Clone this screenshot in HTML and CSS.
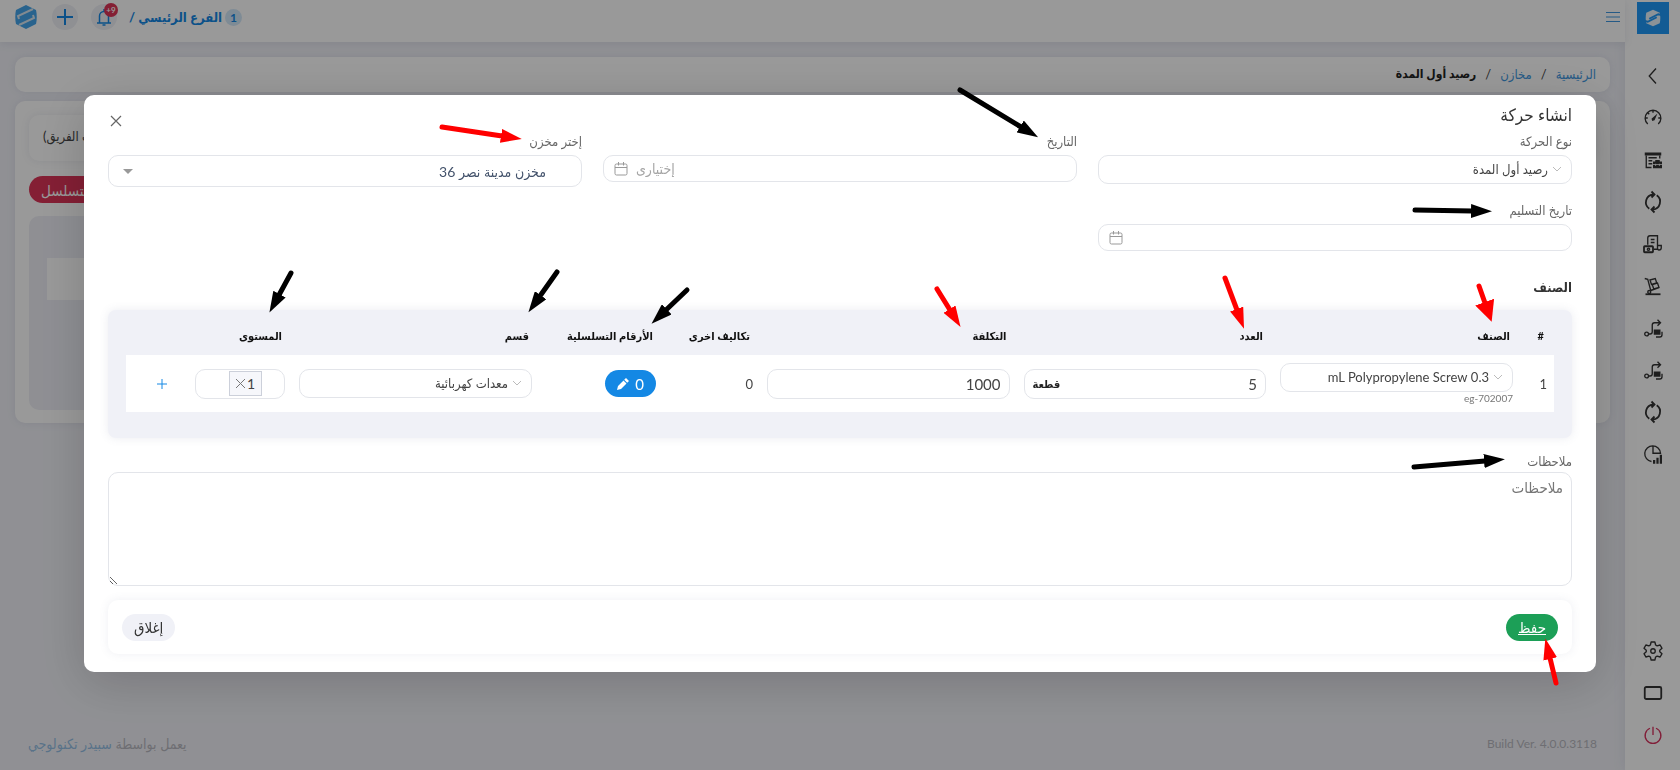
FILE: index.html
```html
<!DOCTYPE html>
<html lang="ar" dir="rtl">

<head>
    <meta charset="UTF-8">
    <meta name="viewport" content="width=device-width, initial-scale=1.0">
    <title>رصيد أول المدة</title>
    <link rel="stylesheet" href="styles.css">
</head>

<body>

    <div class="layout">

        <!-- Sidebar -->
        <aside class="sidebar">
            <a href="#" class="sidebar-logo" aria-label="الرئيسية">
                <svg width="18" height="18" viewBox="0 0 24 24"><path d="M12 1l9 4c1 4 1 10 0 14l-9 4-9-4C2 15 2 9 3 5z" fill="#e8f3fc"/><path d="M23 8l-4-1-12 6M1 16l4 1 12-6" fill="none" stroke="#1f98f7" stroke-width="2.500"/></svg>
            </a>
            <nav class="sidebar-nav">
                <a href="#" aria-label="رجوع"><svg viewBox="0 0 24 24"><path d="M16 2L7 12l9 10"/></svg></a>
                <a href="#" aria-label="لوحة التحكم"><svg viewBox="0 0 24 24"><path d="M5 20a10.500 10.500 0 1 1 14 0M12 2v3M2 12h3M19 12h3M5 5l2 2"/><path class="solid" d="M18 6l-4 9-3 1-1-3z"/></svg></a>
                <a href="#" aria-label="مخازن"><svg viewBox="0 0 24 24"><path class="solid" d="M1 2h22v4H1zM13 14h2v-2h6v2h3v9H12v-9z"/><path d="M3 6v16h7M21 6v4M6 9h11M6 13h5M6 17h5"/><path class="knock" d="M12 18h12M15.500 17v3M20.500 17v3"/></svg></a>
                <a href="#" aria-label="تحديث"><svg viewBox="0 0 24 24"><path class="thick" d="M7 21A10.500 10.500 0 0 1 12 2M17 3a10.500 10.500 0 0 1-5 19M10-2l4 4-4 4M14 18l-4 4 4 4"/></svg></a>
                <a href="#" aria-label="فواتير"><svg viewBox="0 0 24 24"><path d="M5 13V4c0-2 1-3 3-3h10v18h-5M18 14h5v3c0 2-1 3-3 3s-2-1-2-3M9 6h5M9 10h5"/><rect x="0" y="15" width="12" height="8" rx="1" class="thick"/><circle cx="6" cy="19" r="1.500"/></svg></a>
                <a href="#" aria-label="نقل"><svg viewBox="0 0 24 24"><path d="M1 2l4 1 4 15M9 18l11-4M8 4l7-2 2 6-7 2zM11 10l7-2 2 6-7 2z"/><circle cx="7" cy="20" r="2"/><path class="thick" d="M2 23h20"/></svg></a>
                <a href="#" aria-label="تحويل"><svg viewBox="0 0 24 24"><circle cx="3.500" cy="20" r="2.500"/><path d="M6 20h2c2 0 3-1 3-3V8c0-2 1-3 3-3h8M18 1l4 4-4 4M24 17v4c0 2-1 3-3 3h-5"/><path class="solid" d="M13 14h9v7h-9z"/></svg></a>
                <a href="#" aria-label="تحويل"><svg viewBox="0 0 24 24"><circle cx="3.500" cy="20" r="2.500"/><path d="M6 20h2c2 0 3-1 3-3V8c0-2 1-3 3-3h8M18 1l4 4-4 4M24 17v4c0 2-1 3-3 3h-5"/><path class="solid" d="M13 14h9v7h-9z"/></svg></a>
                <a href="#" aria-label="تحديث"><svg viewBox="0 0 24 24"><path class="thick" d="M7 21A10.500 10.500 0 0 1 12 2M17 3a10.500 10.500 0 0 1-5 19M10-2l4 4-4 4M14 18l-4 4 4 4"/></svg></a>
                <a href="#" aria-label="تقارير"><svg viewBox="0 0 24 24"><path d="M10 22A10.500 10.500 0 1 1 22 11H12V1"/><path class="solid" d="M12 20h3v5h-3zM16.500 17h3v8h-3zM21 13h3v12h-3z"/></svg></a>
            </nav>
            <nav class="sidebar-nav sidebar-bottom">
                <a href="#" aria-label="الإعدادات"><svg viewBox="0 0 24 24"><path stroke-linejoin="round" d="M9.500 0h5l1 4 2 1.200 4-1.200 2.500 4.400-3 2.600v2l3 2.600-2.500 4.400-4-1.200-2 1.200-1 4h-5l-1-4-2-1.200-4 1.200L0 15.600 3 13v-2L0 8.400 2.500 4l4 1.200 2-1.200z"/><circle cx="12" cy="12" r="3"/></svg></a>
                <a href="#" aria-label="ملء الشاشة"><svg viewBox="0 0 24 24"><rect x="1" y="4" width="22" height="16" rx="2" class="thick"/></svg></a>
                <a href="#" class="power" aria-label="خروج"><svg viewBox="0 0 24 24"><path d="M8 3a10.500 10.500 0 1 0 8 0M12 1v11"/></svg></a>
            </nav>
        </aside>

        <div class="main">

            <!-- Header -->
            <header class="topbar">
                <button type="button" class="icon-btn" aria-label="القائمة">
                    <svg width="14" height="12" viewBox="0 0 14 12" stroke="#3f97e0"><path d="M0 1.500h14M0 6h14M0 10.500h14"/></svg>
                </button>
                <div class="topbar-end">
                    <span class="branch-count">1</span>
                    <a href="#" class="branch">الفرع الرئيسي /</a>
                    <button type="button" class="round-btn bell" aria-label="الإشعارات">
                        <svg width="14" height="17" viewBox="0 0 14 17" fill="none" stroke="#1488e4" stroke-width="1.500"><path d="M0 14h14M2.500 14V7a4.500 4.500 0 0 1 9 0v7M7 2.500V0M5.500 16h3"/></svg>
                        <span class="bell-badge">9+</span>
                    </button>
                    <button type="button" class="round-btn" aria-label="إضافة">
                        <svg width="18" height="18" viewBox="0 0 18 18" stroke="#1488e4" stroke-width="2"><path d="M9 1v16M1 9h16"/></svg>
                    </button>
                    <svg class="hex-logo" width="26" height="26" viewBox="0 0 26 26"><path fill="#45a6ec" d="M13 1l10 5c1 4 1 10 0 14l-10 5L3 20C2 16 2 10 3 6z"/><path d="M20 5L5 12l1 3M6 21l15-7-1-3" stroke="#d9e6f0" stroke-width="2" fill="none"/></svg>
                </div>
            </header>

            <!-- Page content -->
            <main class="content">
                <nav class="breadcrumb card">
                    <a href="#">الرئيسية</a>
                    <span>/</span>
                    <a href="#">مخازن</a>
                    <span>/</span>
                    <b>رصيد أول المدة</b>
                </nav>
                <section class="card list-card">
                    <div class="card filter-box">طلب الفريق)</div>
                    <button type="button" class="btn btn-danger">إضافة بالتسلسل</button>
                    <div class="list-panel">
                        <div class="list-row"></div>
                    </div>
                </section>
            </main>

            <footer class="page-footer">
                <span class="version">Build Ver. 4.0.0.3118</span>
                <span>يعمل بواسطة <a href="#">سبيدر تكنولوجي</a></span>
            </footer>
        </div>
    </div>

    <!-- Modal -->
    <div class="overlay">
        <form class="modal" role="dialog" aria-labelledby="modalTitle">
            <div class="modal-header">
                <h2 id="modalTitle">انشاء حركة</h2>
                <button type="button" class="icon-btn" aria-label="إغلاق النافذة">
                    <svg width="12" height="12" viewBox="0 0 12 12" stroke="#666" stroke-width="1.200"><path d="M1 1l10 10M11 1L1 11"/></svg>
                </button>
            </div>

            <div class="form-grid">
                <div class="form-group">
                    <label for="type">نوع الحركة</label>
                    <div class="field field-select">
                        <svg class="chevron" viewBox="0 0 10 10"><path d="M1 3l4 4 4-4"/></svg>
                        <select id="type"><option>رصيد أول المدة</option></select>
                    </div>
                </div>
                <div class="form-group">
                    <label for="date">التاريخ</label>
                    <div class="field field-date">
                        <input type="text" id="date" placeholder="إختيارى">
                        <svg class="calendar" viewBox="0 0 14 14"><rect x="1" y="2" width="12" height="11" rx="1.500"/><path d="M1 5.500h12M4.500 0v3.500M9.500 0v3.500"/></svg>
                    </div>
                </div>
                <div class="form-group">
                    <label for="store">إختر مخزن</label>
                    <div class="field field-store">
                        <select id="store"><option>مخزن مدينة نصر 36</option></select>
                        <span class="caret"></span>
                    </div>
                </div>
                <div class="form-group">
                    <label for="delivery">تاريخ التسليم</label>
                    <div class="field field-date">
                        <input type="text" id="delivery">
                        <svg class="calendar" viewBox="0 0 14 14"><rect x="1" y="2" width="12" height="11" rx="1.500"/><path d="M1 5.500h12M4.500 0v3.500M9.500 0v3.500"/></svg>
                    </div>
                </div>
            </div>

            <h3>الصنف</h3>
            <div class="items-panel">
                <table class="items">
                    <colgroup>
                        <col class="col-num">
                        <col class="col-select">
                        <col>
                        <col>
                        <col class="col-extra">
                        <col class="col-serial">
                        <col class="col-select">
                        <col class="col-level">
                        <col class="col-add">
                    </colgroup>
                    <thead>
                        <tr>
                            <th>#</th>
                            <th>الصنف</th>
                            <th>العدد</th>
                            <th>التكلفة</th>
                            <th>تكاليف اخرى</th>
                            <th>الأرقام التسلسلية</th>
                            <th>قسم</th>
                            <th>المستوى</th>
                            <th></th>
                        </tr>
                    </thead>
                    <tbody>
                        <tr>
                            <td>1</td>
                            <td>
                                <div class="field field-select">
                                    <svg class="chevron" viewBox="0 0 10 10"><path d="M1 3l4 4 4-4"/></svg>
                                    <select aria-label="الصنف"><option>0.3 mL Polypropylene Screw</option></select>
                                </div>
                                <small>eg-702007</small>
                            </td>
                            <td>
                                <div class="field field-number">
                                    <input type="text" value="5" aria-label="العدد">
                                    <b>قطعة</b>
                                </div>
                            </td>
                            <td>
                                <div class="field field-number">
                                    <input type="text" value="1000" aria-label="التكلفة">
                                </div>
                            </td>
                            <td>0</td>
                            <td>
                                <button type="button" class="btn btn-serial">0
                                    <svg width="12" height="12" viewBox="0 0 12 12" fill="#fff"><path d="M0 12l1-4 5.500-5.500 3 3L4 11zM7.200 1.800L9 0l3 3-1.800 1.800z"/></svg>
                                </button>
                            </td>
                            <td>
                                <div class="field field-select">
                                    <svg class="chevron" viewBox="0 0 10 10"><path d="M1 3l4 4 4-4"/></svg>
                                    <select aria-label="قسم"><option>معدات كهربائية</option></select>
                                </div>
                            </td>
                            <td>
                                <div class="field field-level">
                                    <span class="tag">1<button type="button" class="icon-btn" aria-label="حذف"><svg width="9" height="9" viewBox="0 0 9 9" stroke="#777"><path d="M0 0l9 9M9 0L0 9"/></svg></button></span>
                                </div>
                            </td>
                            <td class="cell-add">
                                <button type="button" class="icon-btn" aria-label="إضافة"><svg width="10" height="10" viewBox="0 0 10 10" stroke="#1488e4"><path d="M5 0v10M0 5h10"/></svg></button>
                            </td>
                        </tr>
                    </tbody>
                </table>
            </div>

            <label for="notes">ملاحظات</label>
            <textarea id="notes" placeholder="ملاحظات"></textarea>

            <div class="modal-footer">
                <button type="submit" class="btn btn-save">حفظ</button>
                <button type="button" class="btn btn-close">إغلاق</button>
            </div>
        </form>
    </div>

    <!-- Guide arrows -->
    <svg class="arrows" width="1680" height="770" viewBox="0 0 1680 770">
        <defs>
            <marker id="headBlack" markerUnits="userSpaceOnUse" markerWidth="22" markerHeight="14" refX="1" refY="7" orient="auto"><path d="M0 0l21 7-21 7z" fill="#000"/></marker>
            <marker id="headRed" markerUnits="userSpaceOnUse" markerWidth="22" markerHeight="14" refX="1" refY="7" orient="auto"><path d="M0 0l21 7-21 7z" fill="#f00"/></marker>
            <marker id="headWide" markerUnits="userSpaceOnUse" markerWidth="22" markerHeight="20" refX="1" refY="10" orient="auto"><path d="M0 0l21 10-21 10z" fill="#f00"/></marker>
        </defs>
        <g class="arrow-black">
            <path d="M960 90L1021 127"/>
            <path d="M1415 210L1472 211"/>
            <path d="M291 273L279 295"/>
            <path d="M557 272L540 296"/>
            <path d="M687 290L666 310"/>
            <path d="M1414 467L1485 461"/>
        </g>
        <g class="arrow-red">
            <path d="M442 127L502 136"/>
            <path d="M937 289L950 310"/>
            <path d="M1225 278L1237 310"/>
            <path d="M1556 683L1550 658"/>
        </g>
        <path class="arrow-wide" d="M1479 286L1485 303"/>
    </svg>

</body>

</html>
```

FILE: styles.css
```css
* {
    box-sizing: border-box;
}

body {
    margin: 0;
    background-color: #f0f1f7;
    color: #444;
    font-family: Lato, "DejaVu Sans Condensed", "DejaVu Sans", sans-serif;
    font-size: 13px;
}

a {
    color: #3f97e0;
    text-decoration: none;
}

button,
input,
select,
textarea {
    font-family: inherit;
    color: inherit;
}

.layout {
    display: flex;
    min-height: 100vh;
}

/* Sidebar */
.sidebar {
    display: flex;
    flex-direction: column;
    align-items: center;
    width: 55px;
    padding: 2px 0 14px;
    background: #fff;
    box-shadow: 0 0 12px rgba(90, 95, 140, 0.12);
}

.sidebar-logo {
    display: flex;
    align-items: center;
    justify-content: center;
    width: 32px;
    height: 32px;
    margin-bottom: 21px;
    background: #1f98f7;
}

.sidebar-nav a {
    display: flex;
    align-items: center;
    justify-content: center;
    height: 42px;
}

.sidebar-nav svg {
    width: 18px;
    height: 18px;
    overflow: visible;
    fill: none;
    stroke: #333;
    stroke-width: 1.8;
}

.sidebar-nav .thick {
    stroke-width: 2.4;
}

.sidebar-nav .solid {
    fill: #333;
    stroke: none;
}

.sidebar-nav .knock {
    stroke: #fff;
    stroke-width: 1;
}

.sidebar-bottom {
    margin-top: auto;
}

.sidebar-nav .power svg {
    stroke: #d8345f;
}

/* Header */
.main {
    display: flex;
    flex-direction: column;
    flex: 1;
}

.topbar {
    display: flex;
    align-items: center;
    justify-content: space-between;
    height: 42px;
    padding: 0 5px 8px 13px;
    background: #fff;
    box-shadow: 0 2px 8px rgba(90, 95, 140, 0.12);
}

.topbar-end {
    display: flex;
    align-items: center;
}

.icon-btn {
    display: inline-flex;
    padding: 0;
    border: none;
    background: none;
    cursor: pointer;
}

.branch-count {
    width: 17px;
    height: 17px;
    margin-left: 3px;
    border-radius: 50%;
    background: #d3e8f9;
    color: #1488e4;
    font-size: 12px;
    font-weight: bold;
    line-height: 17px;
    text-align: center;
}

.branch {
    margin-left: 12px;
    color: #1488e4;
    font-size: 13px;
    font-weight: bold;
}

.round-btn {
    display: flex;
    align-items: center;
    justify-content: center;
    position: relative;
    width: 26px;
    height: 26px;
    margin-left: 13px;
    padding: 0;
    border: none;
    border-radius: 50%;
    background: #eff0f6;
}

.bell-badge {
    position: absolute;
    top: -1px;
    right: -1px;
    width: 14px;
    height: 14px;
    border-radius: 50%;
    background: #dc3458;
    color: #fff;
    font-size: 8px;
    font-weight: bold;
    line-height: 14px;
}

/* Page content */
.content {
    padding: 15px;
}

.card {
    border-radius: 10px;
    background: #fff;
    box-shadow: 0 0 8px rgba(90, 95, 140, 0.12);
}

.breadcrumb {
    display: flex;
    align-items: center;
    gap: 9px;
    height: 35px;
    margin-bottom: 9px;
    padding: 0 14px 2px;
}

.breadcrumb b {
    color: #222;
    font-size: 12px;
}

.list-card {
    height: 322px;
    padding: 14px;
    text-align: left;
}

.filter-box {
    height: 46px;
    margin-bottom: 15px;
    padding: 0 14px;
    line-height: 42px;
}

.btn {
    height: 27px;
    padding: 0 12px;
    border: none;
    border-radius: 14px;
    font-size: 15px;
    line-height: 24px;
    cursor: pointer;
}

.btn-danger {
    background: #dc3458;
    color: #fff;
}

.list-panel {
    height: 194px;
    margin-top: 13px;
    padding: 42px 18px;
    border-radius: 10px;
    background: #eeeff6;
}

.list-row {
    height: 42px;
    background: #fff;
}

.page-footer {
    display: flex;
    justify-content: space-between;
    margin-top: auto;
    padding: 0 28px 16px;
    color: #b8b8c0;
    font-size: 14px;
    line-height: 20px;
}

.version {
    font-size: 12px;
}

.page-footer a {
    color: #95bfe4;
}

/* Modal */
.overlay {
    display: flex;
    justify-content: center;
    align-items: flex-start;
    position: fixed;
    inset: 0;
    padding-top: 95px;
    background: rgba(0, 0, 0, 0.4);
}

.modal {
    width: 90%;
    padding: 8px 24px 18px;
    border-radius: 10px;
    background: #fff;
    box-shadow: 0 10px 50px rgba(0, 0, 0, 0.18);
}

.modal-header {
    display: flex;
    align-items: flex-end;
    justify-content: space-between;
    height: 28px;
    padding: 0 0 4px 2px;
}

.modal h2 {
    margin: 0;
    color: #333;
    font-size: 17px;
    font-weight: normal;
    line-height: 24px;
}

.modal label {
    display: block;
    color: #666;
    font-size: 13px;
    line-height: 20px;
}

.form-grid {
    display: grid;
    grid-template-columns: repeat(3, 1fr);
    gap: 13px 21px;
    align-items: start;
}

.form-group label {
    margin-bottom: 4px;
}

.field {
    display: flex;
    align-items: center;
    width: 100%;
    border: 1px solid #e3e5ea;
    border-radius: 10px;
    background: #fff;
}

.field input,
.field select {
    flex: 1;
    min-width: 0;
    height: 100%;
    padding: 0;
    border: none;
    outline: none;
    background: none;
    appearance: none;
}

.field-select {
    height: 29px;
    gap: 4px;
    padding: 0 9px 2px;
}

.field-select select {
    font-size: 13px;
}

.chevron {
    width: 10px;
    height: 10px;
    fill: none;
    stroke: #bbb;
}

.field-date {
    height: 27px;
    gap: 8px;
    padding-left: 10px;
}

.field-date input {
    font-size: 14px;
    text-align: left;
}

.field-date input::placeholder {
    color: #a5a5a5;
}

.calendar {
    width: 14px;
    height: 14px;
    fill: none;
    stroke: #999;
}

.field-store {
    height: 32px;
    padding: 0 35px 0 14px;
    color: #43526b;
}

.field-store select {
    font-size: 14px;
}

.caret {
    border: 5px solid transparent;
    border-top-color: #999;
    border-bottom: none;
}

.modal h3 {
    margin: 24px 0 11px;
    color: #333;
    font-size: 13px;
    line-height: 24px;
}

/* Items table */
.items-panel {
    margin-bottom: 13px;
    padding: 8px 18px 26px;
    border-radius: 8px;
    background: #f0f1f7;
    box-shadow: 0 0 10px rgba(90, 95, 140, 0.12);
}

.items {
    width: 100%;
    table-layout: fixed;
    border-collapse: collapse;
}

.items th {
    height: 37px;
    padding: 0 10px 2px;
    color: #111;
    font-size: 11px;
    text-align: right;
    white-space: nowrap;
}

.items td {
    height: 57px;
    padding: 0 7px;
    background: #fff;
    vertical-align: middle;
}

.items small {
    display: block;
    color: #777;
    font-size: 10px;
    line-height: 12px;
}

.col-num {
    width: 34px;
}

.col-select {
    width: 247px;
}

.col-extra {
    width: 97px;
}

.col-serial {
    width: 124px;
}

.col-level {
    width: 104px;
}

.col-add {
    width: 62px;
}

.field-number {
    height: 30px;
    padding: 0 8px;
}

.field-number input {
    font-size: 15px;
}

.field-number b {
    color: #222;
    font-size: 11px;
}

.btn-serial {
    display: inline-flex;
    align-items: center;
    gap: 6px;
    background: #1488e4;
    color: #fff;
}

.field-level {
    height: 30px;
    padding: 0 22px;
}

.tag {
    display: flex;
    align-items: center;
    justify-content: center;
    gap: 2px;
    width: 33px;
    height: 25px;
    border: 1px solid #ccd0da;
    background: #f6f7fb;
    font-size: 14px;
}

.items .cell-add {
    padding-right: 21px;
}

/* Notes */
textarea {
    display: block;
    width: 100%;
    height: 114px;
    margin-top: 1px;
    padding: 4px 8px;
    border: 1px solid #e3e5ea;
    border-radius: 10px;
    font-size: 15px;
    line-height: 20px;
}

textarea::placeholder {
    color: #777;
}

.modal-footer {
    display: flex;
    align-items: center;
    justify-content: space-between;
    height: 54px;
    margin-top: 14px;
    padding: 0 14px;
    border-radius: 10px;
    box-shadow: 0 0 10px rgba(90, 95, 140, 0.1);
}

.btn-save {
    background: #1c9f57;
    color: #fff;
    text-decoration: underline;
}

.btn-close {
    background: #f0f1f7;
    color: #333;
}

/* Guide arrows */
.arrows {
    position: absolute;
    top: 0;
    left: 0;
    fill: none;
    stroke-width: 5;
    stroke-linecap: round;
    pointer-events: none;
}

.arrow-black path {
    stroke: #000;
    marker-end: url(#headBlack);
}

.arrow-red path {
    stroke: #f00;
    marker-end: url(#headRed);
}

.arrow-wide {
    stroke: #f00;
    marker-end: url(#headWide);
}
```
